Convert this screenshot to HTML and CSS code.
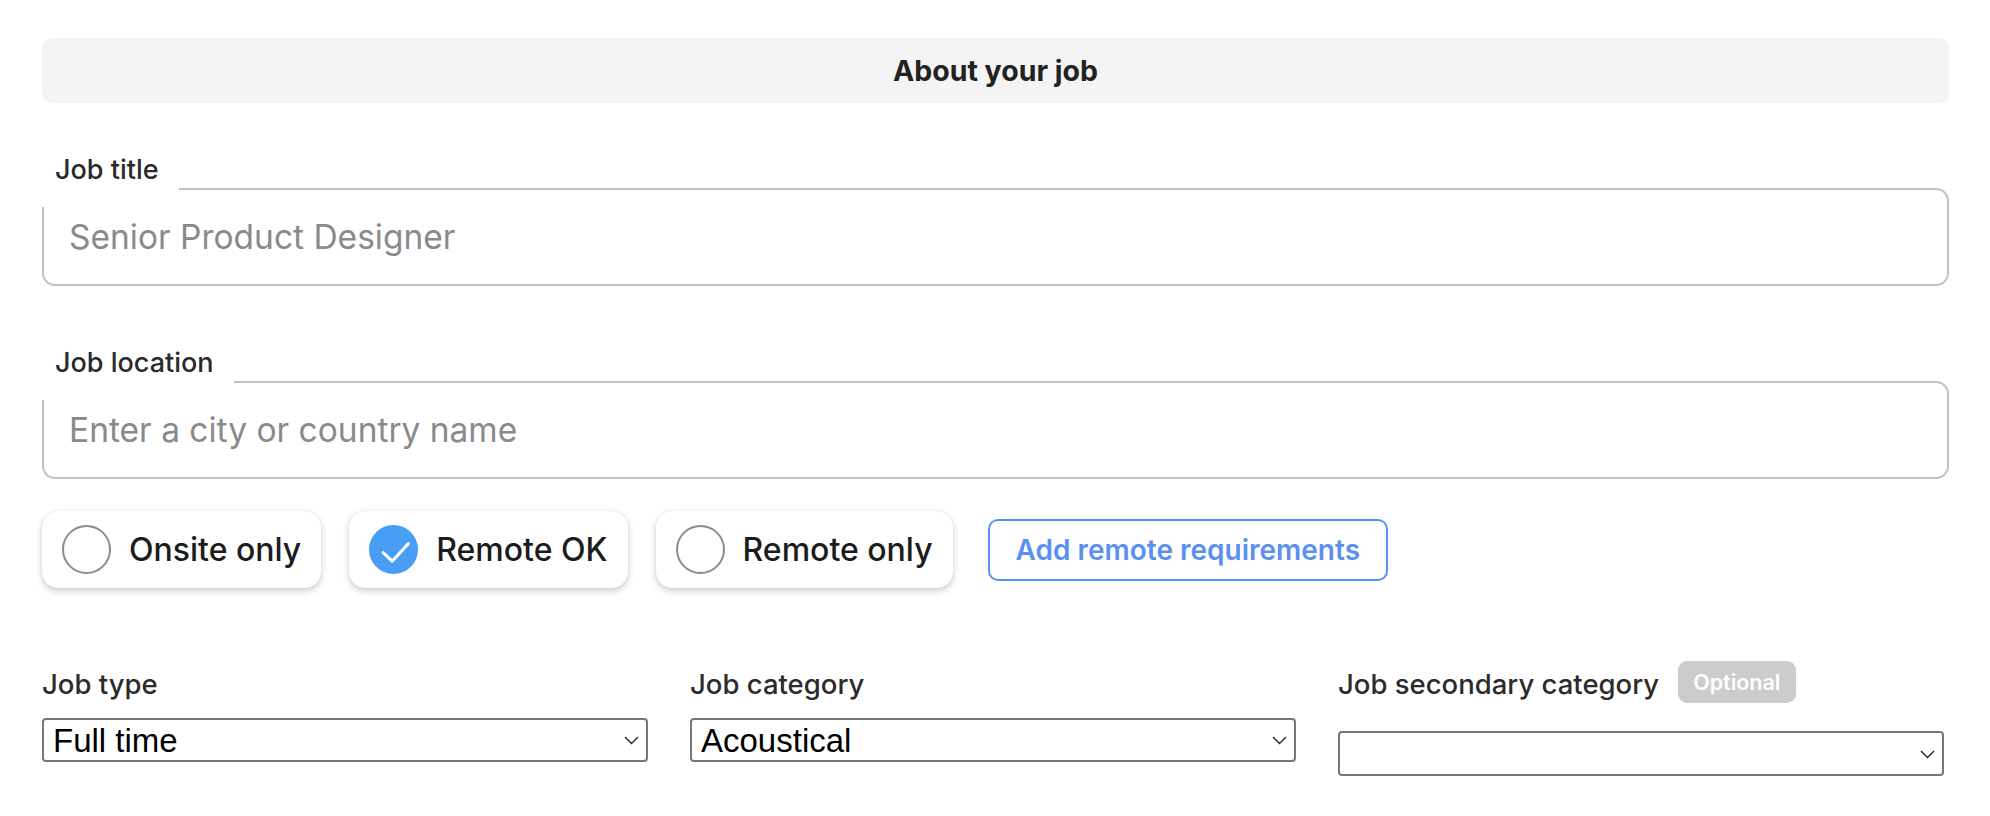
FILE: index.html
```html
<!DOCTYPE html>
<html lang="en">
<head>
<meta charset="utf-8">
<title>About your job</title>
<link rel="stylesheet" href="styles.css">
</head>
<body>
<main class="form">
  <h2 class="section-title">About your job</h2>

  <div class="field field--first">
    <label class="field-label" for="job-title">Job title</label>
    <input id="job-title" class="text-input" type="text" placeholder="Senior Product Designer">
  </div>

  <div class="field">
    <label class="field-label" for="job-location">Job location</label>
    <input id="job-location" class="text-input" type="text" placeholder="Enter a city or country name">
  </div>

  <div class="remote-row">
    <label class="pill">
      <span class="radio"></span>
      <span class="pill-text">Onsite only</span>
    </label>
    <label class="pill">
      <span class="radio radio--checked">
        <svg class="check" viewBox="0 0 50 50" aria-hidden="true"><path d="M13.5 28.5 L23.5 38 L41.5 18.5" fill="none" stroke="#fff" stroke-width="3.4" stroke-linecap="round" stroke-linejoin="round"/></svg>
      </span>
      <span class="pill-text">Remote OK</span>
    </label>
    <label class="pill">
      <span class="radio"></span>
      <span class="pill-text">Remote only</span>
    </label>
    <button class="outline-btn" type="button">Add remote requirements</button>
  </div>

  <div class="selects">
    <div class="select-field">
      <div class="field-head">Job type</div>
      <div class="select-wrap">
        <select class="select"><option>Full time</option></select>
        <svg class="chev" viewBox="0 0 15 9" aria-hidden="true"><path d="M1 1 L7.5 7.5 L14 1" fill="none" stroke="#222" stroke-width="1.4"/></svg>
      </div>
    </div>
    <div class="select-field">
      <div class="field-head">Job category</div>
      <div class="select-wrap">
        <select class="select"><option>Acoustical</option></select>
        <svg class="chev" viewBox="0 0 15 9" aria-hidden="true"><path d="M1 1 L7.5 7.5 L14 1" fill="none" stroke="#222" stroke-width="1.4"/></svg>
      </div>
    </div>
    <div class="select-field">
      <div class="field-head field-head--badge">Job secondary category <span class="badge">Optional</span></div>
      <div class="select-wrap">
        <select class="select select--tall"><option></option></select>
        <svg class="chev" viewBox="0 0 15 9" aria-hidden="true"><path d="M1 1 L7.5 7.5 L14 1" fill="none" stroke="#222" stroke-width="1.4"/></svg>
      </div>
    </div>
  </div>
</main>
</body>
</html>
```

FILE: styles.css
```css
html, body {
  margin: 0;
  background: #ffffff;
}

body {
  font-family: Inter, "Noto Sans", sans-serif;
  color: #222222;
}

.form {
  padding: 38px 41px 40px 42px;
}

.section-title {
  margin: 0;
  height: 65px;
  background: #f4f4f4;
  border-radius: 10px;
  display: flex;
  align-items: center;
  justify-content: center;
  font-size: 28.5px;
  font-weight: 700;
  color: #222222;
}

.field {
  position: relative;
  padding-top: 38px;
  margin-top: 57px;
}

.field--first {
  margin-top: 47px;
}

.field-label {
  position: absolute;
  top: 0;
  left: 0;
  padding: 4px 20px 21px 13px;
  background: #ffffff;
  font-size: 27px;
  line-height: 32px;
  font-weight: 500;
  color: #2a2a2a;
}

.text-input {
  display: block;
  width: 100%;
  box-sizing: border-box;
  height: 98px;
  margin: 0;
  border: 2px solid #c1c1c1;
  border-radius: 13px;
  padding: 0 25px;
  font-family: Inter, "Noto Sans", sans-serif;
  font-size: 33.5px;
  color: #222222;
  background: #ffffff;
  outline: none;
}

.text-input::placeholder {
  color: #8a8a8a;
}

.remote-row {
  display: flex;
  align-items: center;
  gap: 28px;
  margin-top: 32px;
}

.pill {
  display: flex;
  align-items: center;
  gap: 18px;
  height: 77px;
  box-sizing: border-box;
  padding: 0 20px 0 20px;
  background: #ffffff;
  border-radius: 16px;
  box-shadow: 0 3px 7px rgba(0, 0, 0, 0.2), 0 0 1px rgba(0, 0, 0, 0.18);
  font-size: 32px;
  font-weight: 500;
  color: #1c1c1c;
}

.radio {
  flex: none;
  width: 49px;
  height: 49px;
  box-sizing: border-box;
  border-radius: 50%;
  border: 2px solid #8c8c8c;
  background: #ffffff;
}

.radio--checked {
  display: flex;
  background: #489df5;
  border-color: #489df5;
}

.check {
  width: 100%;
  height: 100%;
}

.outline-btn {
  margin-left: 7px;
  height: 62px;
  padding: 0 26px;
  border: 2px solid #5b8ff0;
  border-radius: 10px;
  background: #ffffff;
  color: #5b8ff0;
  font-family: Inter, "Noto Sans", sans-serif;
  font-size: 28px;
  font-weight: 600;
}

.selects {
  display: grid;
  grid-template-columns: repeat(3, 606px);
  column-gap: 42px;
  align-items: start;
  margin-top: 79px;
}

.field-head {
  display: flex;
  align-items: center;
  gap: 19px;
  height: 34px;
  margin-bottom: 17px;
  font-size: 27.5px;
  font-weight: 500;
  color: #2b2b2b;
}

.field-head--badge {
  margin-bottom: 30px;
}

.badge {
  display: flex;
  align-items: center;
  height: 42px;
  margin-top: -4px;
  padding: 0 15px;
  border-radius: 9px;
  background: #cccccc;
  color: #ffffff;
  font-size: 21.5px;
  font-weight: 600;
}

.select-wrap {
  position: relative;
}

.select {
  display: block;
  width: 100%;
  height: 44px;
  box-sizing: border-box;
  margin: 0;
  appearance: none;
  -webkit-appearance: none;
  border: 2px solid #777777;
  border-radius: 4px;
  background: #ffffff;
  padding: 0 40px 0 9px;
  font-family: "Liberation Sans", Arial, sans-serif;
  font-size: 33px;
  color: #000000;
}

.select--tall {
  height: 45px;
}

.chev {
  position: absolute;
  right: 9px;
  top: 50%;
  width: 15px;
  height: 9px;
  margin-top: -4px;
  pointer-events: none;
}
```
